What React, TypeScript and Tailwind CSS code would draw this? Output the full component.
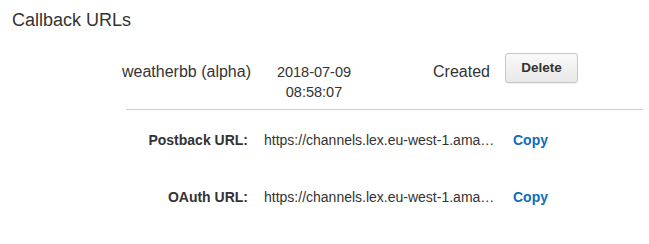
import React from "react";

const urls = [
    { label: "Postback URL:", value: "https://channels.lex.eu-west-1.amazonaws.com/facebook/webhook/abc" },
    { label: "OAuth URL:", value: "https://channels.lex.eu-west-1.amazonaws.com/facebook/oauth/abc" }
];

export default function App() {
    return (
        <div className="w-[649px] h-[244px] bg-white text-[#333] font-['Liberation_Sans',Arial,sans-serif]">
            <h2 className="pl-[12px] pt-[9px] text-[18px] leading-[22px]">Callback URLs</h2>
            <div className="ml-[122px] mr-[6px] mt-[30px]">
                <div className="flex items-start leading-[20px]">
                    <div className="w-[140px] pt-[1px] text-[16px]">weatherbb (alpha)</div>
                    <div className="w-[104px] pt-[1px] text-center text-[14.5px]">
                        <div>2018-07-09</div>
                        <div>08:58:07</div>
                    </div>
                    <div className="ml-[67px] w-[72px] pt-[1px] text-[16px]">Created</div>
                    <button className="-mt-[8px] w-[73px] h-[30px] rounded-[3px] border border-[#c6c6c6] bg-gradient-to-b from-[#fafafa] to-[#e8e8e8] text-[13.5px] font-bold text-[#333] shadow-[0_1px_0_rgba(0,0,0,0.05)]">
                        Delete
                    </button>
                </div>
                <div className="mt-[7px] ml-[4px] border-t border-[#cfcfcf]" />
                <div className="flex flex-col gap-[37px] pt-[20px]">
                    {urls.map((u) => (
                        <div key={u.label} className="flex items-center text-[14px] leading-[20px]">
                            <div className="w-[126px] text-right font-bold text-[#333]">{u.label}</div>
                            <div className="ml-[16px] w-[236px] truncate">{u.value}</div>
                            <a className="ml-[13px] font-bold text-[#0f6cbd] cursor-pointer">Copy</a>
                        </div>
                    ))}
                </div>
            </div>
        </div>
    );
}
